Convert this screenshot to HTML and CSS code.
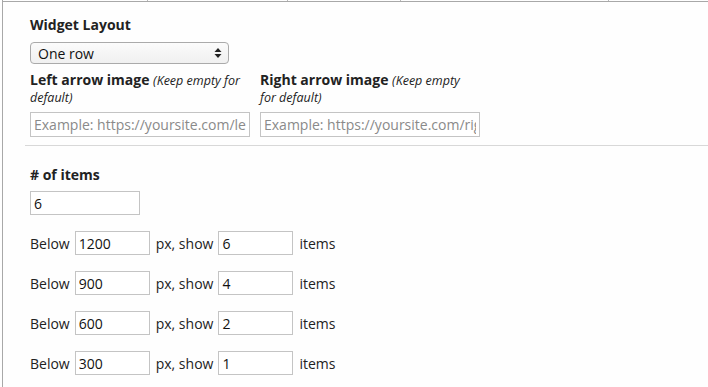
FILE: index.html
```html
<!DOCTYPE html>
<html lang="en">
<head>
    <meta charset="UTF-8">
    <title>Widget settings</title>
    <link rel="stylesheet" href="styles.css">
</head>
<body>
    <div class="tabStrip">
        <span class="tabCell cell1"></span>
        <span class="tabCell cell2"></span>
        <span class="tabCell cell3"></span>
        <span class="tabCell cell4"></span>
    </div>
    <div class="panel">
        <label class="fieldTitle" for="layoutSelect">Widget Layout</label>
        <div class="selectWrap">
            <select id="layoutSelect" class="layoutSelect">
                <option>One row</option>
                <option>Two rows</option>
            </select>
            <svg class="selectArrows" width="8" height="12" viewBox="0 0 8 12">
                <path d="M4 1 L7.5 5 L0.5 5 Z" fill="#222"/>
                <path d="M4 11 L7.5 7 L0.5 7 Z" fill="#222"/>
            </svg>
        </div>

        <div class="arrowFields">
            <div class="arrowField">
                <label class="arrowLabel" for="leftArrow"><b>Left arrow image</b> <i>(Keep empty for default)</i></label>
                <input type="text" id="leftArrow" class="textInput wideInput" placeholder="Example: https://yoursite.com/left-arrow.png">
            </div>
            <div class="arrowField">
                <label class="arrowLabel" for="rightArrow"><b>Right arrow image</b> <i>(Keep empty for default)</i></label>
                <input type="text" id="rightArrow" class="textInput wideInput" placeholder="Example: https://yoursite.com/right-arrow.png">
            </div>
        </div>

        <hr class="divider">

        <label class="fieldTitle itemsTitle" for="itemCount">#&nbsp;of items</label>
        <input type="text" id="itemCount" class="textInput countInput" value="6">

        <div class="breakpoints">
            <div class="breakRow">
                <span>Below</span>
                <input type="text" class="textInput smallInput" value="1200">
                <span>px, show</span>
                <input type="text" class="textInput smallInput" value="6">
                <span>items</span>
            </div>
            <div class="breakRow">
                <span>Below</span>
                <input type="text" class="textInput smallInput" value="900">
                <span>px, show</span>
                <input type="text" class="textInput smallInput" value="4">
                <span>items</span>
            </div>
            <div class="breakRow">
                <span>Below</span>
                <input type="text" class="textInput smallInput" value="600">
                <span>px, show</span>
                <input type="text" class="textInput smallInput" value="2">
                <span>items</span>
            </div>
            <div class="breakRow">
                <span>Below</span>
                <input type="text" class="textInput smallInput" value="300">
                <span>px, show</span>
                <input type="text" class="textInput smallInput" value="1">
                <span>items</span>
            </div>
        </div>
    </div>
</body>
</html>
```

FILE: styles.css
```css
html, body {
    margin: 0;
    background: #fefefe;
}
body {
    font-family: "Open Sans", "Liberation Sans", sans-serif;
    font-size: 14px;
    color: #222;
    height: 387px;
    overflow: hidden;
}
/* strip of table cells that ends just above the panel */
.tabStrip {
    display: flex;
    height: 1px;
    border-bottom: 1px solid #a8a8a8;
    margin-left: 2px;
    border-left: 1px solid #a8a8a8;
}
.tabCell {
    border-right: 1px solid #b8b8b8;
}
.cell1 { width: 144px; }
.cell2 { width: 139px; }
.cell3 { width: 112px; }
.cell4 { width: 207px; }
.panel {
    margin-left: 2px;
    border-left: 1px solid #a8a8a8;
    padding: 14px 0 0 27px;
    height: 385px;
    box-sizing: border-box;
}
.fieldTitle {
    display: block;
    font-weight: 700;
    line-height: 17px;
}
.selectWrap {
    position: relative;
    width: 199px;
    margin-top: 9px;
}
.layoutSelect {
    appearance: none;
    -webkit-appearance: none;
    width: 199px;
    height: 22px;
    padding: 0 0 0 7px;
    border: 1px solid #aaa;
    border-radius: 4px;
    background: linear-gradient(#fbfbfb, #f0f0f0);
    font-family: inherit;
    font-size: 14px;
    color: #111;
}
.selectArrows {
    position: absolute;
    right: 7px;
    top: 5px;
    pointer-events: none;
}
.arrowFields {
    display: flex;
    gap: 10px;
    margin-top: 7px;
}
.arrowField {
    width: 220px;
}
.arrowLabel {
    display: block;
    width: 216px;
    line-height: 17px;
    height: 32px;
    margin-bottom: 9px;
}
.arrowLabel i {
    font-size: 12.5px;
    line-height: 15px;
}
.textInput {
    box-sizing: border-box;
    border: 1px solid #c4c4c4;
    background: #fff;
    font-family: inherit;
    font-size: 14px;
    color: #111;
    padding: 0 3px;
    margin: 0;
}
.textInput::placeholder {
    color: #8a8a8a;
}
.wideInput {
    width: 220px;
    height: 25px;
}
.divider {
    border: none;
    border-top: 1px solid #d8d8d8;
    margin: 8px 0 0 -5px;
}
.itemsTitle {
    margin-top: 20px;
}
.countInput {
    display: block;
    width: 110px;
    height: 24px;
    margin-top: 8px;
}
.breakpoints {
    display: flex;
    flex-direction: column;
    gap: 16px;
    margin-top: 16px;
}
.breakRow {
    display: flex;
    align-items: center;
    gap: 5px;
}
.smallInput {
    width: 75px;
    height: 24px;
    margin-right: 1px;
}
```
